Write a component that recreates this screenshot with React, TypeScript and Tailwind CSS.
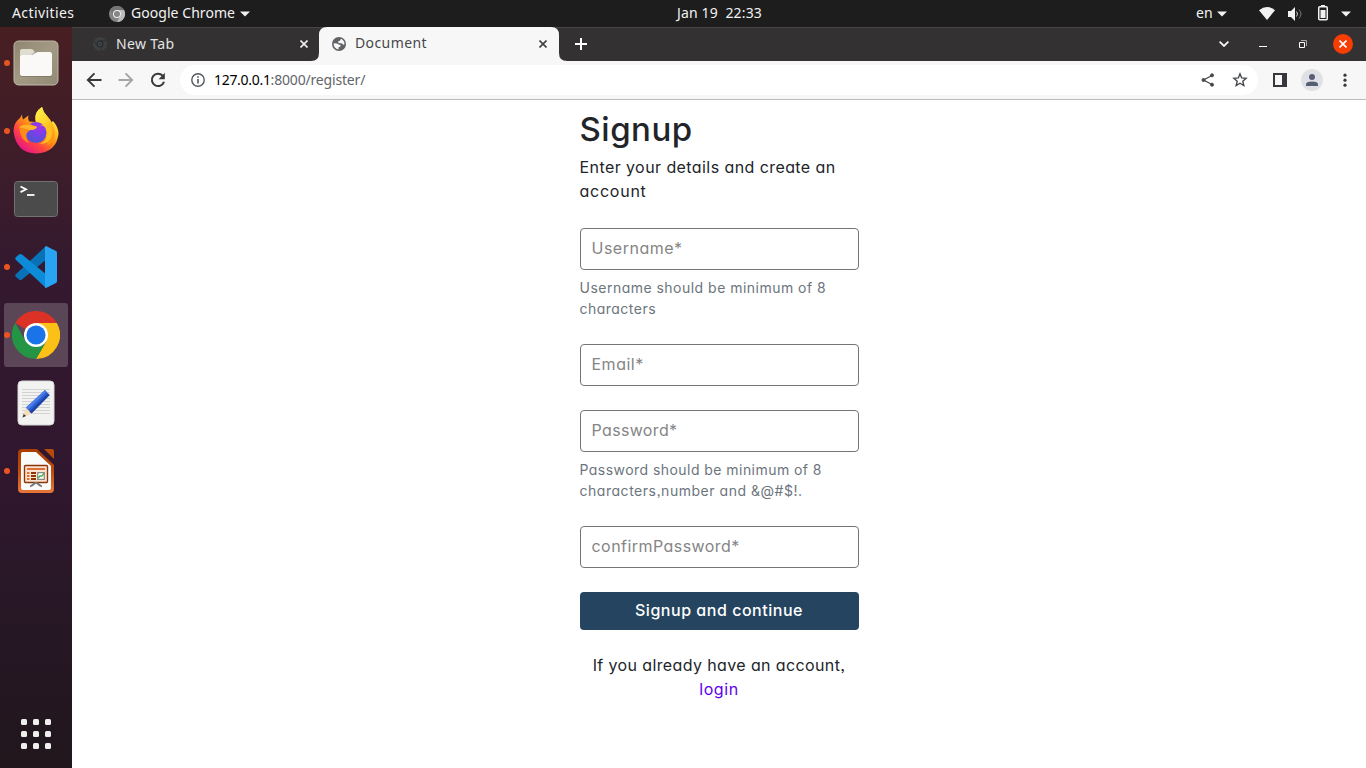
import React from "react";

const UI = "font-['Noto_Sans','Open_Sans',sans-serif]";
const PAGE = "font-['Inter',sans-serif] [font-feature-settings:'cv11','ss03']";

function Caret() {
  return (
    <svg width="10" height="6" viewBox="0 0 10 6" fill="#f2f2f2">
      <path d="M0 .5h10L5 5.5z" />
    </svg>
  );
}

function TopBar() {
  return (
    <header className={`flex h-[27px] shrink-0 items-center bg-[#1d1d1d] text-[14px] leading-[25px] text-[#f2f2f2] ${UI}`}>
      <div className="w-[109px] pb-[2px] pl-3 tracking-[0.4px]">Activities</div>
      <svg width="16" height="16" viewBox="0 0 16 16" className="mr-[6px] shrink-0">
        <circle cx="8" cy="8" r="8" fill="#858585" />
        <path d="M8 4h7A8 8 0 0 1 8 16l4-7z" fill="#bcbcbc" />
        <path d="M1 4a8 8 0 0 1 14 0H8L4.500 8z" fill="#747474" />
        <circle cx="8" cy="8" r="4" fill="#eee" />
        <circle cx="8" cy="8" r="3" fill="#858585" />
      </svg>
      <div className="w-[109px] pb-[2px] tracking-[0.05px] whitespace-nowrap">Google Chrome</div>
      <Caret />
      <div className="ml-[427px] w-[519px] pb-[2px] whitespace-pre tracking-[0.15px]">Jan 19  22:33</div>
      <div className="w-[21px] pb-[2px]">en</div>
      <Caret />
      <svg width="16" height="13" viewBox="0 0 16 13" className="ml-[32px]" fill="#f2f2f2">
        <path d="M0 3.200Q8-3 16 3.200L8 13z" />
      </svg>
      <svg width="15" height="14" viewBox="0 0 15 14" className="ml-[13px]">
        <path d="M0 4h3l4-4v14l-4-4H0z" fill="#f2f2f2" />
        <path d="M8.500 4.500q2 2.500 0 5" fill="none" stroke="#ccc" />
        <path d="M11 2.500q4 4.500 0 9" fill="none" stroke="#777" />
      </svg>
      <svg width="10" height="16" viewBox="0 0 10 16" className="mb-[2px] ml-[15px]">
        <path d="M3 0h4v2H3z" fill="#f2f2f2" />
        <rect x=".75" y="1.750" width="8.500" height="13" rx="1" fill="none" stroke="#f2f2f2" strokeWidth="1.500" />
        <path d="M2.500 5h5v8h-5z" fill="#f2f2f2" />
      </svg>
      <div className="ml-[13px]"><Caret /></div>
    </header>
  );
}

function Files() {
  return (
    <svg width="48" height="48" viewBox="0 0 48 48">
      <defs>
        <linearGradient id="files" x2="1" y2="1">
          <stop stopColor="#8f8670" />
          <stop offset=".5" stopColor="#a39a85" />
          <stop offset="1" stopColor="#918973" />
        </linearGradient>
      </defs>
      <rect x="2" y="2" width="44" height="44" rx="4.500" fill="url(#files)" stroke="#c0baaa" />
      <path d="M8 12q0-2 2-2h9q2 0 3 2l2 3v8H8z" fill="#e0dccf" />
      <path d="M8 18q0-2 2-2h9l4-3h15q2 0 2 2v21q0 2-2 2H10q-2 0-2-2z" fill="#6b6452" opacity=".5" />
      <path d="M8 17.500Q8 16 10 16h9q2 0 3.500-1.500T26 13h12q2 0 2 2v20q0 2-2 2H10q-2 0-2-2z" fill="#faf9f7" />
    </svg>
  );
}

function Firefox() {
  return (
    <svg width="48" height="48" viewBox="0 1 48 48">
      <defs>
        <linearGradient id="fxb" x1=".85" y1=".1" x2=".2" y2=".95">
          <stop stopColor="#fff44f" />
          <stop offset=".25" stopColor="#ffcb30" />
          <stop offset=".5" stopColor="#ff8a16" />
          <stop offset=".72" stopColor="#ff4145" />
          <stop offset="1" stopColor="#e3158a" />
        </linearGradient>
        <radialGradient id="fxg" cx=".65" cy=".25" r=".8">
          <stop stopColor="#a531ee" />
          <stop offset=".5" stopColor="#7542e5" />
          <stop offset="1" stopColor="#4857d8" />
        </radialGradient>
        <linearGradient id="fxy" x2=".6" y2="1">
          <stop stopColor="#fff44f" />
          <stop offset=".5" stopColor="#ffd52c" />
          <stop offset="1" stopColor="#ff980e" />
        </linearGradient>
      </defs>
      <path d="M1.500 25Q1.500 17 8 12l2-3.500q0 3 1 5l5.500-4q-1 4 1 6l6 .5Q22 6 30 1q1 5 5 9 3 3 4 7l2-2q5.500 6 5.500 13-2 18.500-22.500 19.500Q4 47 1.500 25z" fill="url(#fxb)" />
      <path d="M23.500 14Q22 6 30 1q1 5 5 9 7 7 8 17 0 8-7 12l-4-13z" fill="url(#fxy)" />
      <circle cx="24" cy="26.500" r="10.500" fill="url(#fxg)" />
      <path d="M7 21q5-4 11-3l7 3q-1 2.500-6.500 3-3 1-4 4-1 5 3 9-8-2-9.500-11-1-3-1-5z" fill="#ff8b18" />
      <path d="M7 21q5-3 10-2l8 1.500q-1 3.500-7 3.500z" fill="#ffb32b" />
      <path d="M28 19q7.500 1 7.500 9-1 8-9 10 12 0 13.500-10 0-5-3.500-9 .5 3 .5 3-3-4-9-3z" fill="#ffc022" />
    </svg>
  );
}

function Terminal() {
  return (
    <svg width="48" height="48" viewBox="0 0 48 48">
      <rect x="2.500" y="6.500" width="43" height="35" rx="3" fill="#4b4b4b" stroke="#727272" />
      <path d="M8.500 11.500l5.500 2.800-5.500 2.800" fill="none" stroke="#fff" strokeWidth="1.800" />
      <path d="M15 20h7.500" stroke="#fff" strokeWidth="1.800" />
    </svg>
  );
}

function Code() {
  return (
    <svg width="48" height="48" viewBox="0 0 48 48">
      <path d="M34 3L4 31q-1.500 1.500 0 3l3 2.500q1.500 1 3 0L35 16z" fill="#0871b7" />
      <path d="M34 45L4 17q-1.500-1.500 0-3l3-2.500q1.500-1 3 0L35 32z" fill="#0e8bd8" />
      <path d="M34 3l10 5q1 .5 1 2v28q0 1.500-1 2l-10 5q-1 0-1-1V4z" fill="#28a4f2" />
    </svg>
  );
}

function Chrome() {
  return (
    <svg width="48" height="48" viewBox="0 0 48 48">
      <path d="M24 24L3.200 12A24 24 0 0 1 44.800 12z" fill="#dc3226" />
      <path d="M24 12h20.800A24 24 0 0 1 24 48l10.400-18z" fill="#fbc116" />
      <path d="M34.400 30L24 48A24 24 0 0 1 3.200 12l10.400 18z" fill="#249545" />
      <circle cx="24" cy="24" r="12" fill="#fff" />
      <circle cx="24" cy="24" r="9.600" fill="#1a73e8" />
    </svg>
  );
}

function Editor() {
  return (
    <svg width="48" height="48" viewBox="0 0 48 48">
      <rect x="6" y="2" width="36" height="44" rx="4" fill="#f2f2f1" stroke="#d7d7d5" />
      <path d="M10 10.500h28M10 13.500h28M10 16.500h28M10 19.500h28M10 22.500h28M10 25.500h28M10 28.500h28M10 31.500h28M10 34.500h28" stroke="#d2d2d2" />
      <path d="M10.500 38.500l3.500-10 6 6z" fill="#f7dcb8" />
      <path d="M10.500 38.500l1.200-3.500 2.400 2z" fill="#333" />
      <path d="M14 28.500L33 11l4.500 5L19.500 34.500z" fill="#2f5fd2" />
      <path d="M14 28.500L33 11l1.500 1.700-18.500 18z" fill="#4a80e8" />
      <path d="M17.500 32.500L36 14.500l1.500 1.700-18 18.300z" fill="#1c45a5" />
    </svg>
  );
}

function Impress() {
  return (
    <svg width="48" height="48" viewBox="0 0 48 48">
      <defs>
        <linearGradient id="imp" x2="0" y2="1">
          <stop stopColor="#a63e00" />
          <stop offset=".5" stopColor="#bd4c0d" />
          <stop offset="1" stopColor="#e8773a" />
        </linearGradient>
      </defs>
      <path d="M10 2h15l17 16v24q0 4-4 4H10q-4 0-4-4V6q0-4 4-4z" fill="url(#imp)" />
      <path d="M10.500 5H24l15 14v22q0 2-2 2H11q-2 0-2-2V7q0-2 1.500-2z" fill="#fafafa" />
      <path d="M32 2h8q2 0 2 2v8z" fill="#b54a0b" />
      <rect x="12.500" y="18.500" width="23" height="17" rx="1" fill="#fbe3d3" stroke="#8d3506" strokeWidth="1.400" />
      <path d="M15 22h18" stroke="#d8631f" strokeWidth="1.800" />
      <path d="M15 26h2.500M15 29h2.500M15 32h2.500" stroke="#e2732c" strokeWidth="1.800" />
      <path d="M19 26h5M19 29h5M19 32h5" stroke="#8d3506" strokeWidth="1.800" />
      <path d="M25.700 25.700h6.600v6.600h-6.600z" fill="#fff" stroke="#888" strokeWidth="1.200" />
      <path d="M26 31l2-2 2 0 2-3" fill="none" stroke="#3fae3f" strokeWidth="1.300" />
      <path d="M18 39.500q2-.5 5-3.500h2q3 3 5 3.500" fill="none" stroke="#777" strokeWidth="1.800" />
    </svg>
  );
}

const apps = [
  { name: "files", icon: <Files />, running: true, active: false },
  { name: "firefox", icon: <Firefox />, running: true, active: false },
  { name: "terminal", icon: <Terminal />, running: false, active: false },
  { name: "code", icon: <Code />, running: true, active: false },
  { name: "chrome", icon: <Chrome />, running: true, active: true },
  { name: "editor", icon: <Editor />, running: false, active: false },
  { name: "impress", icon: <Impress />, running: true, active: false },
];

function Dock() {
  return (
    <aside className="flex w-[72px] shrink-0 flex-col items-center bg-[linear-gradient(180deg,#481f22_0%,#3b1c2b_22%,#34192f_32%,#30162e_60%,#291828_75%,#21161c_100%)] pt-1">
      {apps.map((a) => (
        <div key={a.name} className={`relative mb-1 flex size-16 items-center justify-center rounded-[3px] ${a.active ? "bg-white/20" : ""}`}>
          {a.running && <span className="absolute top-[29px] left-0 size-[6px] rounded-full bg-[#e95420]" />}
          {a.icon}
        </div>
      ))}
      <div className="mt-auto mb-[19px] grid grid-cols-3 gap-[6px]">
        {Array.from({ length: 9 }, (_, i) => (
          <span key={i} className="size-[6px] rounded-[1.500px] bg-[#f0efed]" />
        ))}
      </div>
    </aside>
  );
}

function Cross({ color }: { color: string }) {
  return (
    <svg width="8" height="8" viewBox="0 0 8 8" stroke={color} strokeWidth="1.600">
      <path d="M.5.5l7 7M7.500.5l-7 7" />
    </svg>
  );
}

function TabStrip() {
  return (
    <div className={`flex h-[34px] shrink-0 border-t border-[#484647] bg-[#333132] text-[14px] leading-[30px] ${UI}`}>
      <div className="flex w-[240px] items-center pb-px pl-5">
        <svg width="16" height="16" viewBox="0 0 16 16" className="mr-2">
          <circle cx="8" cy="8" r="7" fill="#3c4043" />
          <path d="M8 4.600h6.500M5 9.700L1.800 4.200M11 9.700L7.800 15" stroke="#303134" />
          <circle cx="8" cy="8" r="3" fill="#3c4043" stroke="#2b2a2b" strokeWidth="1.200" />
        </svg>
        <span className="w-[184px] pb-px tracking-[0.35px] text-[#e4e4e4]">New Tab</span>
        <Cross color="#f0f0f0" />
      </div>
      <div className="relative -mt-px -ml-px flex h-[34px] w-[256px] items-center">
        <svg width="256" height="34" viewBox="0 0 256 34" className="absolute inset-0">
          <path d="M0 34q8 0 8-8V8q0-8 8-8h224q8 0 8 8v18q0 8 8 8z" fill="#f7f7f7" />
        </svg>
        <svg width="14" height="14" viewBox="0 0 14 14" className="relative ml-[21px]">
          <circle cx="7" cy="7" r="7" fill="#5f6368" />
          <path d="M1.500 6.500q3-.5 4.500.5 1 1 2.500 1 .5 2-2 2.200V12.500Q1.800 11.500 1.500 6.500zM9 1.800Q12.500 3.500 12.500 7q-1 1.500-2 0-.5-1-2-.7-2 .2-2.500-1.300 0-1 1.500-1 1-1 1.500-2.200z" fill="#f7f7f7" />
        </svg>
        <span className="relative ml-[9px] w-[184px] pb-[2px] tracking-[0.4px] text-[#45474a]">Document</span>
        <span className="relative"><Cross color="#3c4043" /></span>
      </div>
      <svg width="12" height="12" viewBox="0 0 12 12" className="mt-[10px] ml-2" stroke="#fff" strokeWidth="2">
        <path d="M6 0v12M0 6h12" />
      </svg>
      <div className="ml-auto flex items-center pr-[13px] pb-[2px]">
        <svg width="10" height="6" viewBox="0 0 10 6" className="mr-[30px]" fill="none" stroke="#f5f5f5" strokeWidth="1.800">
          <path d="M.6.6L5 5 9.400.6" />
        </svg>
        <span className="mt-[5px] mr-[32px] h-px w-2 bg-white" />
        <svg width="8" height="8" viewBox="0 0 8 8" className="mr-[26px]" fill="none" stroke="#fff">
          <path d="M.5 2.500h5v5h-5z" />
          <path d="M2 .5h5.500V6" stroke="#aaa" />
        </svg>
        <span className="flex size-5 items-center justify-center rounded-full bg-[#f63d02]"><Cross color="#fff" /></span>
      </div>
    </div>
  );
}

function Toolbar() {
  return (
    <div className="flex h-[39px] shrink-0 items-center border-b border-[#bdbdbd] bg-[#f7f7f7] pl-[14px]">
      <svg width="16" height="16" viewBox="0 0 16 16" fill="none" stroke="#36383b" strokeWidth="1.900">
        <path d="M15.500 8H2M8.500 1.300L1.800 8l6.700 6.700" />
      </svg>
      <svg width="16" height="16" viewBox="0 0 16 16" className="ml-4" fill="none" stroke="#a5a6a8" strokeWidth="1.900">
        <path d="M.5 8H14M7.500 1.300L14.200 8l-6.700 6.700" />
      </svg>
      <svg width="16" height="16" viewBox="0 0 16 16" className="ml-4">
        <path d="M12.600 3.600A6.200 6.200 0 1 0 14 9.700" fill="none" stroke="#36383b" strokeWidth="2" />
        <path d="M14.800.8v6.400H8.600z" fill="#36383b" />
      </svg>
      <div className={`ml-[14px] flex h-[30px] w-[1078px] items-center rounded-full bg-white pl-[11px] text-[14px] leading-[30px] ${UI}`}>
        <svg width="14" height="14" viewBox="0 0 14 14" fill="none" stroke="#54575c" strokeWidth="1.400">
          <circle cx="7" cy="7" r="6.200" />
          <path d="M7 6v4.500M7 3.300v1.500" strokeWidth="1.600" />
        </svg>
        <span className="ml-[9px] tracking-[-0.18px] text-[#626569]"><span className="tracking-[-0.3px] text-black">127.0.0.1</span>:8000/register/</span>
        <svg width="14" height="14" viewBox="0 0 14 14" className="ml-auto" fill="#45484b" stroke="#45484b">
          <path d="M11 2.500L2.500 7l8.500 4.500" fill="none" strokeWidth="1.300" />
          <circle cx="11" cy="2.300" r="1.500" />
          <circle cx="2.500" cy="7" r="1.500" />
          <circle cx="11" cy="11.700" r="1.500" />
        </svg>
        <svg width="16" height="16" viewBox="0 0 16 16" className="mr-[10px] ml-[17px]" fill="none" stroke="#45484b" strokeWidth="1.400">
          <path d="M8 1.900l1.700 4 4.400.4-3.300 2.900 1 4.300L8 11.200l-3.800 2.300 1-4.300-3.300-2.900 4.400-.4z" />
        </svg>
      </div>
      <svg width="14" height="14" viewBox="0 0 14 14" className="ml-[15px]">
        <path d="M0 0h14v14H0z" fill="#36383b" />
        <path d="M2 2h7v10H2z" fill="#f7f7f7" />
      </svg>
      <svg width="22" height="22" viewBox="0 0 22 22" className="ml-[14px]">
        <circle cx="11" cy="11" r="11" fill="#dfe1e6" />
        <circle cx="11" cy="8" r="3" fill="#565f76" />
        <path d="M5 17v-1.700Q5 12.500 11 12.500t6 2.800V17z" fill="#565f76" />
      </svg>
      <svg width="4" height="14" viewBox="0 0 4 14" className="ml-[19.500px]" fill="#36383b">
        <circle cx="2" cy="2.200" r="1.600" />
        <circle cx="2" cy="7.200" r="1.600" />
        <circle cx="2" cy="12.200" r="1.600" />
      </svg>
    </div>
  );
}

function Field({ label, tracking }: { label: string; tracking: string }) {
  return (
    <input
      placeholder={label}
      className={`block h-[42px] w-full rounded-[4px] border border-[#757575] bg-white pr-3 pb-[2px] pl-[11px] text-[16px] outline-none placeholder:text-[#858585] ${tracking}`}
    />
  );
}

function Signup() {
  return (
    <main className={`flex grow justify-center bg-white pt-[10px] text-[16px] text-[#212529] ${PAGE}`}>
      <form className="flex w-[279px] flex-col">
        <h2 className="h-[45px] text-[33px] leading-[39px] font-medium tracking-[0.5px]">Signup</h2>
        <p className="leading-6 whitespace-nowrap"><span className="tracking-[0.42px]">Enter your details and create an</span><br /><span className="tracking-[0.75px]">account</span></p>
        <div className="mt-[25px]"><Field label="Username*" tracking="tracking-[0.5px]" /></div>
        <p className="mt-[7px] text-[14px] leading-[21px] tracking-[0.48px] whitespace-nowrap text-[#6c757d]">Username should be minimum of 8<br />characters</p>
        <div className="mt-[25px]"><Field label="Email*" tracking="tracking-[0.5px]" /></div>
        <div className="mt-6"><Field label="Password*" tracking="tracking-[0.35px]" /></div>
        <p className="mt-[7px] text-[14px] leading-[21px] whitespace-nowrap text-[#6c757d]"><span className="tracking-[0.45px]">Password should be minimum of 8</span><br /><span className="tracking-[0.53px]">characters,number and &amp;@#$!.</span></p>
        <div className="mt-[25px]"><Field label="confirmPassword*" tracking="tracking-[0.45px]" /></div>
        <button type="button" className="mt-6 h-[38px] rounded-[4px] bg-[#24445f] pb-[3px] font-medium tracking-[0.53px] text-white">Signup and continue</button>
        <p className="mt-[23px] text-center leading-6 whitespace-nowrap"><span className="tracking-[0.38px]">If you already have an account,</span><br /><a className="tracking-[0.6px] text-[#5a00f0]">login</a></p>
      </form>
    </main>
  );
}

export default function App() {
  return (
    <div className="flex h-[768px] w-[1366px] flex-col overflow-hidden">
      <TopBar />
      <div className="flex min-h-0 grow">
        <Dock />
        <div className="flex min-w-0 grow flex-col">
          <TabStrip />
          <Toolbar />
          <Signup />
        </div>
      </div>
    </div>
  );
}
